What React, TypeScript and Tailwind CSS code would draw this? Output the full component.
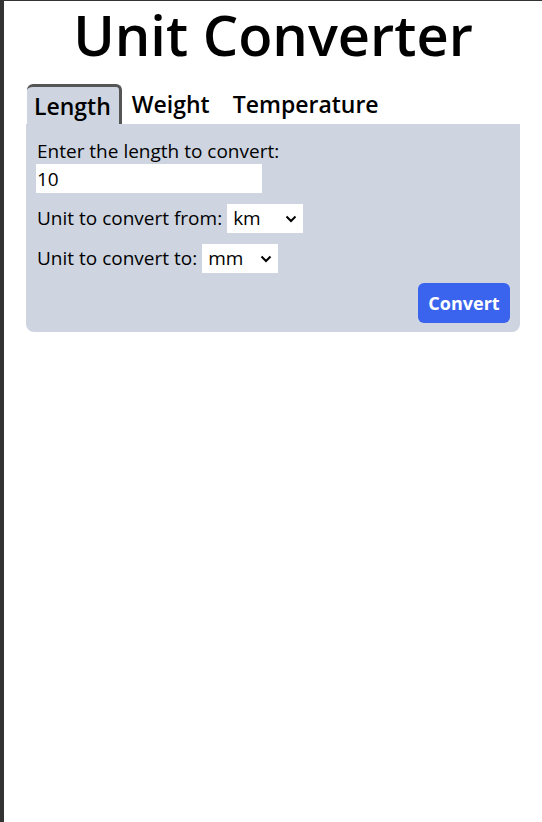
import { useState } from 'react';

const TABS = ['Length', 'Weight', 'Temperature'];
const UNITS = ['km', 'm', 'cm', 'mm'];

function UnitSelect({ value, onChange }: { value: string; onChange: (v: string) => void }): React.ReactElement {
  return (
    <span className="relative inline-block">
      <select
        value={value}
        onChange={(e) => onChange(e.target.value)}
        className="h-[29px] w-[76px] appearance-none bg-white pl-[6px] text-[19px] text-black outline-none"
      >
        {UNITS.map((u) => (
          <option key={u} value={u}>
            {u}
          </option>
        ))}
      </select>
      <svg
        className="pointer-events-none absolute right-[6px] top-[11px]"
        width="12"
        height="8"
        viewBox="0 0 12 8"
        fill="none"
        stroke="black"
        strokeWidth="2"
      >
        <path d="M1.5 1.5 L6 6 L10.5 1.5" />
      </svg>
    </span>
  );
}

export default function App(): React.ReactElement {
  const [tab, setTab] = useState('Length');
  const [amount, setAmount] = useState('10');
  const [from, setFrom] = useState('km');
  const [to, setTo] = useState('mm');

  return (
    <div
      className="min-h-[822px] border-l-4 border-t border-[#333333] bg-white text-black"
      style={{ fontFamily: '"Open Sans", "Noto Sans", sans-serif' }}
    >
      <h1 className="pt-[1px] text-center text-[56px] font-semibold leading-[64px]">Unit Converter</h1>
      <div className="mx-[22px] mt-[18px]">
        <div className="flex items-end gap-[3px] pl-[1px]">
          {TABS.map((t) => (
            <button
              key={t}
              onClick={() => setTab(t)}
              className={
                t === tab
                  ? 'h-[40px] rounded-t-[6px] border-r-[3px] border-t-[3px] border-[#555555] bg-[#ced5e1] pl-[7px] pr-[8px] text-[23px] font-semibold leading-[34px]'
                  : 'h-[40px] px-[7px] text-[23px] font-semibold leading-[40px] last:ml-[6px]'
              }
            >
              {t}
            </button>
          ))}
        </div>
        <div className="flex flex-col rounded-b-[8px] bg-[#ced5e1] px-[10px] pb-[9px] pt-[14px] text-[19px]">
          <label className="pl-[1px] leading-[26px]">Enter the {tab.toLowerCase()} to convert:</label>
          <input
            value={amount}
            onChange={(e) => setAmount(e.target.value)}
            className="h-[29px] w-[226px] bg-white px-[1px] text-[19px] outline-none"
          />
          <div className="mt-[11px] flex items-center gap-[5px] pl-[1px]">
            <span>Unit to convert from:</span>
            <UnitSelect value={from} onChange={setFrom} />
          </div>
          <div className="mt-[11px] flex items-center gap-[5px] pl-[1px]">
            <span>Unit to convert to:</span>
            <UnitSelect value={to} onChange={setTo} />
          </div>
          <div className="mt-[10px] flex justify-end">
            <button className="h-[40px] w-[92px] rounded-[6px] bg-[#3a63ee] text-[18px] font-bold text-white">
              Convert
            </button>
          </div>
        </div>
      </div>
    </div>
  );
}
